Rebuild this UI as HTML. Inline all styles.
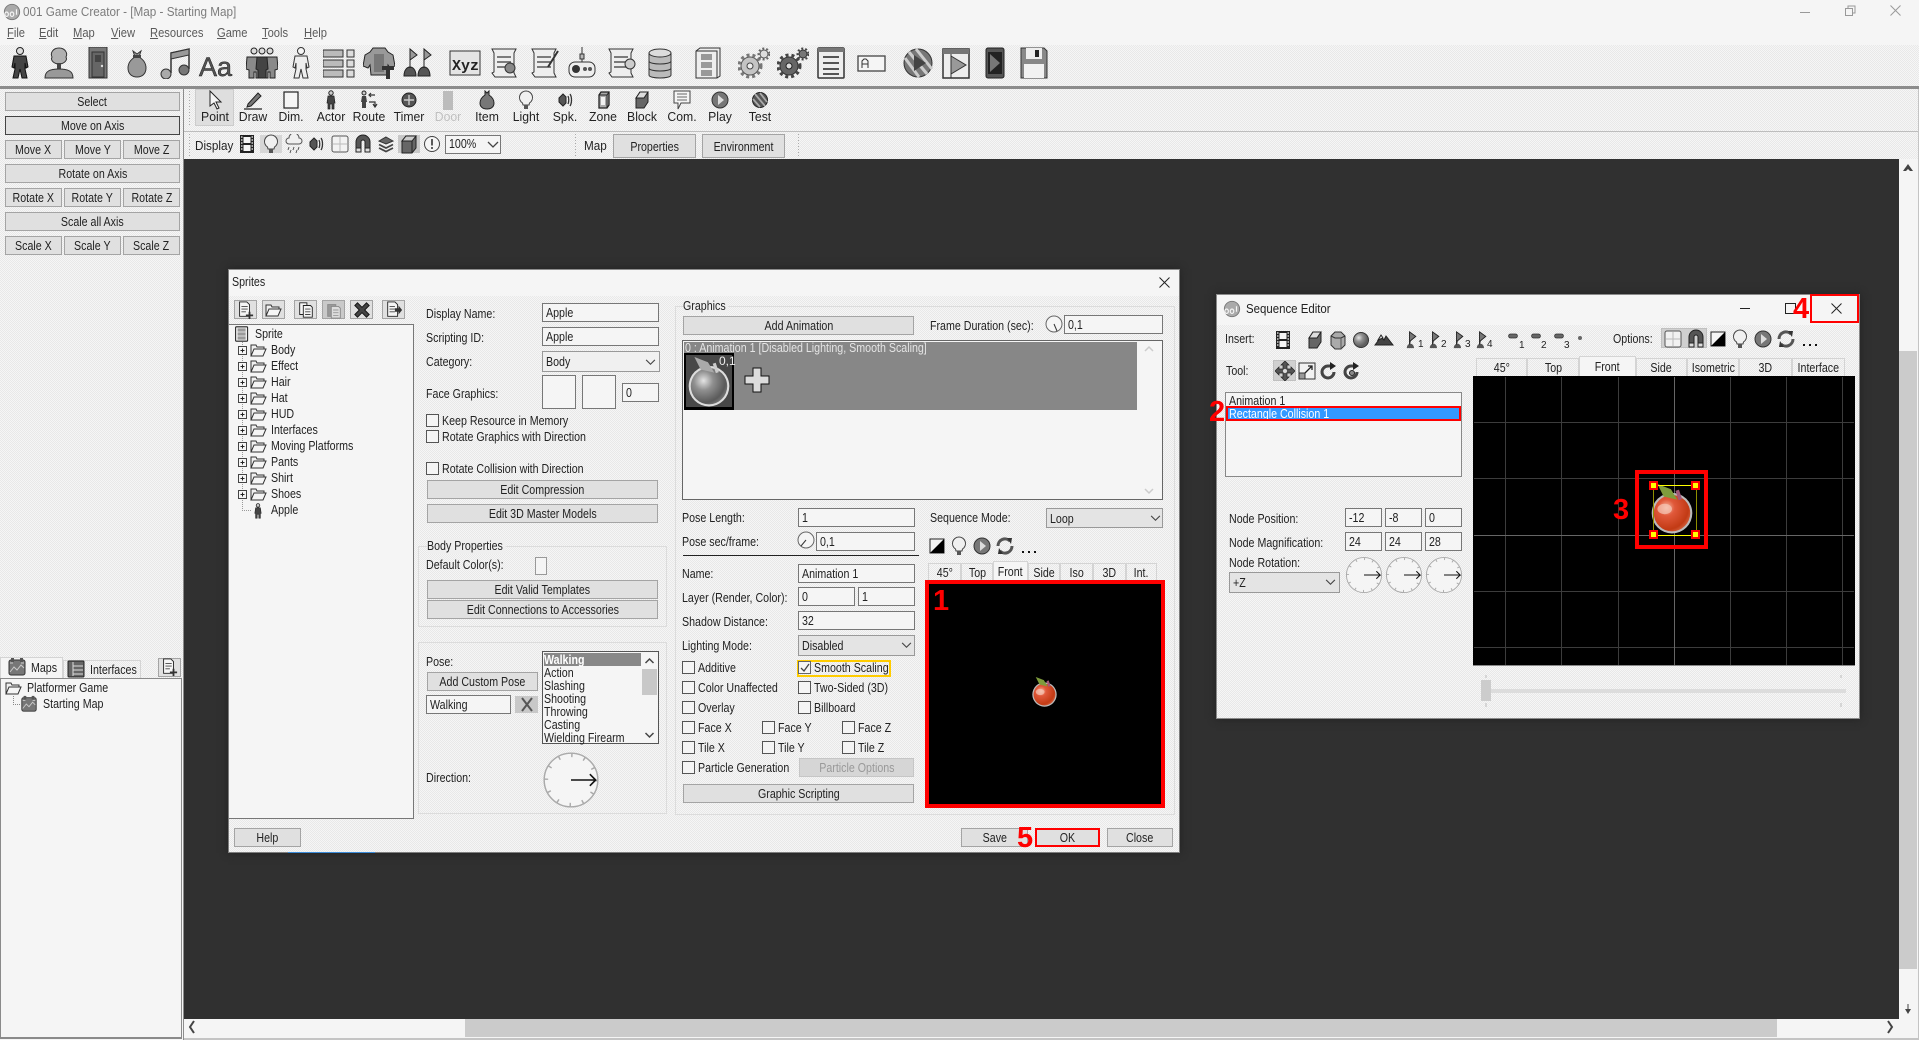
<!DOCTYPE html>
<html><head><meta charset="utf-8"><title>001 Game Creator</title>
<style>
*{box-sizing:border-box}
html,body{margin:0;padding:0;width:1919px;height:1040px;overflow:hidden;background:#f5f5f5;font-family:"Liberation Sans",sans-serif;font-size:13px;color:#222}
div,span.t{position:absolute}
.d{background:repeating-conic-gradient(#e8e8e8 0 25%,#f6f6f6 0 50%) 0 0/2px 2px}
.t{position:absolute;height:16px;line-height:16px;white-space:nowrap;transform:scaleX(.82);transform-origin:0 50%}
.n{position:absolute;height:16px;line-height:16px;white-space:nowrap;text-align:center;width:50px;transform:scaleX(.94)}
.b{display:flex;align-items:center;justify-content:center;background:#e0e0e0;border:1px solid #a4a4a4;white-space:nowrap;overflow:hidden}
.b span{display:inline-block;transform:scaleX(.82);flex:none}
.i{background:#f5f5f5;border:1px solid #777;padding-left:3px;line-height:17px;white-space:nowrap;overflow:hidden}
.i span{display:inline-block;transform:scaleX(.82);transform-origin:0 50%}
.m{background:#e6e6e6;border:1px solid #999;padding-left:3px;line-height:19px;white-space:nowrap}
.m span{display:inline-block;transform:scaleX(.82);transform-origin:0 50%}
.c{width:13px;height:13px;background:#f5f5f5;border:1px solid #555}
.k{background:#f5f5f5;border:1px solid #999}
.tb{display:flex;align-items:center;justify-content:center;border:1px solid #d4d4d4;border-bottom:0;white-space:nowrap}
.tb span{display:inline-block;transform:scaleX(.82)}
.g{border:1px solid #dcdcdc}
.r{position:absolute;border:solid #f00;background:transparent}
.q{position:absolute;font-weight:bold;color:#f00;font-size:29px;line-height:30px;height:30px}
u{text-decoration:underline}
</style></head><body>

<!-- title & menu -->
<span class="t" style="left:23px;top:4px;color:#7c7c7c;transform:scaleX(.9)">001 Game Creator - [Map - Starting Map]</span>
<span class="t" style="left:7px;top:25px;color:#5a5a5a;transform:scaleX(.86)"><u>F</u>ile</span>
<span class="t" style="left:39px;top:25px;color:#5a5a5a;transform:scaleX(.86)"><u>E</u>dit</span>
<span class="t" style="left:73px;top:25px;color:#5a5a5a;transform:scaleX(.86)"><u>M</u>ap</span>
<span class="t" style="left:111px;top:25px;color:#5a5a5a;transform:scaleX(.86)"><u>V</u>iew</span>
<span class="t" style="left:150px;top:25px;color:#5a5a5a;transform:scaleX(.86)"><u>R</u>esources</span>
<span class="t" style="left:217px;top:25px;color:#5a5a5a;transform:scaleX(.86)"><u>G</u>ame</span>
<span class="t" style="left:262px;top:25px;color:#5a5a5a;transform:scaleX(.86)"><u>T</u>ools</span>
<span class="t" style="left:304px;top:25px;color:#5a5a5a;transform:scaleX(.86)"><u>H</u>elp</span>

<!-- toolbars -->
<div class="d" style="left:0;top:45px;width:1919px;height:41px"></div>
<div style="left:0;top:86px;width:1919px;height:3px;background:#8c8c8c"></div>
<div class="d" style="left:184px;top:89px;width:1735px;height:42px"></div>
<div style="left:184px;top:131px;width:1735px;height:1px;background:#bdbdbd"></div>
<div class="d" style="left:184px;top:132px;width:1735px;height:27px"></div>
<div style="left:195px;top:89px;width:39px;height:37px;background:#dedede;border:1px solid #ccc"></div>
<div style="left:260px;top:135px;width:22px;height:18px;background:#d6d6d6"></div>
<div style="left:398px;top:135px;width:22px;height:18px;background:#c8c8c8"></div>

<span class="n" style="left:190px;top:109px">Point</span>
<span class="n" style="left:228px;top:109px">Draw</span>
<span class="n" style="left:266px;top:109px">Dim.</span>
<span class="n" style="left:306px;top:109px">Actor</span>
<span class="n" style="left:344px;top:109px">Route</span>
<span class="n" style="left:384px;top:109px">Timer</span>
<span class="n" style="left:423px;top:109px;color:#c0c0c0">Door</span>
<span class="n" style="left:462px;top:109px">Item</span>
<span class="n" style="left:501px;top:109px">Light</span>
<span class="n" style="left:540px;top:109px">Spk.</span>
<span class="n" style="left:578px;top:109px">Zone</span>
<span class="n" style="left:617px;top:109px">Block</span>
<span class="n" style="left:657px;top:109px">Com.</span>
<span class="n" style="left:695px;top:109px">Play</span>
<span class="n" style="left:735px;top:109px">Test</span>

<span class="t" style="left:195px;top:138px;transform:scaleX(.9)">Display</span>
<div class="i" style="left:445px;top:135px;width:56px;height:19px;line-height:16px"><span>100%</span></div>
<span class="t" style="left:584px;top:138px;transform:scaleX(.9)">Map</span>
<div class="b" style="left:613px;top:134px;width:83px;height:24px"><span>Properties</span></div>
<div class="b" style="left:702px;top:134px;width:83px;height:24px"><span>Environment</span></div>

<!-- sidebar -->
<div class="d" style="left:0;top:89px;width:183px;height:589px"></div>
<div style="left:183px;top:89px;width:1px;height:951px;background:#8c8c8c"></div>
<div class="b" style="left:5px;top:92px;width:175px;height:19px"><span>Select</span></div>
<div class="b" style="left:5px;top:116px;width:175px;height:19px;border-color:#444"><span>Move on Axis</span></div>
<div class="b" style="left:5px;top:140px;width:57px;height:19px"><span>Move X</span></div>
<div class="b" style="left:64px;top:140px;width:57px;height:19px"><span>Move Y</span></div>
<div class="b" style="left:123px;top:140px;width:57px;height:19px"><span>Move Z</span></div>
<div class="b" style="left:5px;top:164px;width:175px;height:19px"><span>Rotate on Axis</span></div>
<div class="b" style="left:5px;top:188px;width:57px;height:19px"><span>Rotate X</span></div>
<div class="b" style="left:64px;top:188px;width:57px;height:19px"><span>Rotate Y</span></div>
<div class="b" style="left:123px;top:188px;width:57px;height:19px"><span>Rotate Z</span></div>
<div class="b" style="left:5px;top:212px;width:175px;height:19px"><span>Scale all Axis</span></div>
<div class="b" style="left:5px;top:236px;width:57px;height:19px"><span>Scale X</span></div>
<div class="b" style="left:64px;top:236px;width:57px;height:19px"><span>Scale Y</span></div>
<div class="b" style="left:123px;top:236px;width:57px;height:19px"><span>Scale Z</span></div>

<div style="left:0;top:657px;width:63px;height:22px;background:#f5f5f5;border:1px solid #d4d4d4;border-bottom:0"></div>
<div class="d" style="left:63px;top:660px;width:78px;height:18px;border:1px solid #d4d4d4;border-bottom:0"></div>
<span class="t" style="left:31px;top:660px">Maps</span>
<span class="t" style="left:90px;top:662px">Interfaces</span>
<div class="b" style="left:158px;top:658px;width:23px;height:19px"></div>
<div style="left:0;top:678px;width:182px;height:361px;background:#f5f5f5;border:1px solid #8a8a8a;border-bottom:2px solid #8a8a8a"></div>
<span class="t" style="left:27px;top:680px">Platformer Game</span>
<span class="t" style="left:43px;top:696px">Starting Map</span>

<!-- dark area -->
<div style="left:184px;top:159px;width:1715px;height:860px;background:#303030"></div>

<!-- scrollbars -->
<div style="left:1899px;top:351px;width:18px;height:618px;background:#cbcbcb"></div>
<div style="left:465px;top:1019px;width:1312px;height:18px;background:#cbcbcb"></div>
<div style="left:184px;top:1038px;width:1735px;height:2px;background:#c4c4c4"></div>
<div style="left:1918px;top:89px;width:1px;height:951px;background:#c4c4c4"></div>

<!-- Sprites dialog -->
<div class="d" style="left:228px;top:269px;width:952px;height:584px;border:1px solid #7d7d7d;border-top-color:#8d8d8d;box-shadow:0 0 8px #222"></div>
<div style="left:229px;top:270px;width:950px;height:26px;background:#f5f5f5"></div>
<div style="left:288px;top:852px;width:87px;height:1px;background:#3b8bd8"></div>
<span class="t" style="left:232px;top:274px">Sprites</span>

<div class="b" style="left:234px;top:300px;width:23px;height:19px"></div>
<div class="b" style="left:262px;top:300px;width:23px;height:19px"></div>
<div class="b" style="left:294px;top:300px;width:23px;height:19px"></div>
<div class="b" style="left:322px;top:300px;width:23px;height:19px;background:#c9c9c9"></div>
<div class="b" style="left:350px;top:300px;width:23px;height:19px"></div>
<div class="b" style="left:382px;top:300px;width:23px;height:19px"></div>

<div style="left:229px;top:324px;width:185px;height:495px;background:#f5f5f5;border-top:1px solid #777;border-right:1px solid #777;border-bottom:1px solid #777"></div>
<span class="t" style="left:255px;top:326px">Sprite</span>
<span class="t" style="left:271px;top:342px">Body</span>
<span class="t" style="left:271px;top:358px">Effect</span>
<span class="t" style="left:271px;top:374px">Hair</span>
<span class="t" style="left:271px;top:390px">Hat</span>
<span class="t" style="left:271px;top:406px">HUD</span>
<span class="t" style="left:271px;top:422px">Interfaces</span>
<span class="t" style="left:271px;top:438px">Moving Platforms</span>
<span class="t" style="left:271px;top:454px">Pants</span>
<span class="t" style="left:271px;top:470px">Shirt</span>
<span class="t" style="left:271px;top:486px">Shoes</span>
<span class="t" style="left:271px;top:502px">Apple</span>

<span class="t" style="left:426px;top:306px">Display Name:</span>
<span class="t" style="left:426px;top:330px">Scripting ID:</span>
<span class="t" style="left:426px;top:354px">Category:</span>
<span class="t" style="left:426px;top:386px">Face Graphics:</span>
<div class="i" style="left:542px;top:303px;width:117px;height:19px"><span>Apple</span></div>
<div class="i" style="left:542px;top:327px;width:117px;height:19px"><span>Apple</span></div>
<div class="m" style="left:542px;top:351px;width:118px;height:21px;background:#f0f0f0"><span>Body</span></div>
<div class="i" style="left:542px;top:375px;width:34px;height:34px"></div>
<div class="i" style="left:582px;top:375px;width:34px;height:34px"></div>
<div class="i" style="left:622px;top:383px;width:37px;height:19px"><span>0</span></div>

<div class="c" style="left:426px;top:414px"></div><span class="t" style="left:442px;top:413px">Keep Resource in Memory</span>
<div class="c" style="left:426px;top:430px"></div><span class="t" style="left:442px;top:429px">Rotate Graphics with Direction</span>
<div class="c" style="left:426px;top:462px"></div><span class="t" style="left:442px;top:461px">Rotate Collision with Direction</span>
<div class="b" style="left:427px;top:480px;width:231px;height:19px"><span>Edit Compression</span></div>
<div class="b" style="left:427px;top:504px;width:231px;height:19px"><span>Edit 3D Master Models</span></div>

<div class="g" style="left:418px;top:546px;width:249px;height:81px"></div>
<span class="t" style="left:427px;top:538px;background:#efefef;padding-right:3px">Body Properties</span>
<span class="t" style="left:426px;top:557px">Default Color(s):</span>
<div class="k" style="left:535px;top:557px;width:12px;height:18px"></div>
<div class="b" style="left:427px;top:580px;width:231px;height:19px"><span>Edit Valid Templates</span></div>
<div class="b" style="left:427px;top:600px;width:231px;height:19px"><span>Edit Connections to Accessories</span></div>

<div class="g" style="left:418px;top:642px;width:249px;height:172px"></div>
<span class="t" style="left:426px;top:654px">Pose:</span>
<div class="b" style="left:427px;top:672px;width:111px;height:19px"><span>Add Custom Pose</span></div>
<div class="i" style="left:426px;top:695px;width:85px;height:19px"><span>Walking</span></div>
<div style="left:515px;top:696px;width:23px;height:17px;background:#c8c8c8"></div>
<div style="left:542px;top:651px;width:117px;height:93px;background:#f5f5f5;border:1px solid #555"></div>
<div style="left:544px;top:653px;width:97px;height:13px;background:#888"></div>
<div style="left:642px;top:669px;width:15px;height:26px;background:#c8c8c8"></div>
<span class="t" style="left:544px;top:652px;color:#fff;font-weight:bold">Walking</span>
<span class="t" style="left:544px;top:665px">Action</span>
<span class="t" style="left:544px;top:678px">Slashing</span>
<span class="t" style="left:544px;top:691px">Shooting</span>
<span class="t" style="left:544px;top:704px">Throwing</span>
<span class="t" style="left:544px;top:717px">Casting</span>
<span class="t" style="left:544px;top:730px">Wielding Firearm</span>
<span class="t" style="left:426px;top:770px">Direction:</span>
<div class="b" style="left:234px;top:828px;width:67px;height:19px"><span>Help</span></div>

<div class="g" style="left:675px;top:306px;width:500px;height:509px"></div>
<span class="t" style="left:683px;top:298px;background:#efefef;padding-right:3px">Graphics</span>
<div class="b" style="left:683px;top:316px;width:231px;height:19px"><span>Add Animation</span></div>
<span class="t" style="left:930px;top:318px">Frame Duration (sec):</span>
<div class="i" style="left:1064px;top:315px;width:99px;height:19px"><span>0,1</span></div>
<div style="left:682px;top:340px;width:481px;height:160px;background:#f5f5f5;border:1px solid #666"></div>
<div style="left:684px;top:342px;width:453px;height:68px;background:#878787"></div>
<span class="t" style="left:685px;top:340px;color:#e4e4e4">0 : Animation 1 [Disabled Lighting, Smooth Scaling]</span>
<div style="left:684px;top:353px;width:50px;height:57px;background:#000"></div>
<div style="left:686px;top:355px;width:46px;height:52px;background:#484848"></div>

<span class="t" style="left:682px;top:510px">Pose Length:</span>
<div class="i" style="left:798px;top:508px;width:117px;height:19px"><span>1</span></div>
<span class="t" style="left:682px;top:534px">Pose sec/frame:</span>
<div class="i" style="left:816px;top:532px;width:99px;height:19px"><span>0,1</span></div>
<div style="left:683px;top:555px;width:236px;height:1px;background:#222"></div>
<span class="t" style="left:930px;top:510px">Sequence Mode:</span>
<div class="m" style="left:1046px;top:508px;width:117px;height:20px;background:#e4e4e4"><span>Loop</span></div>

<div class="tb d" style="left:928px;top:563px;width:33px;height:18px"><span>45°</span></div>
<div class="tb d" style="left:961px;top:563px;width:32px;height:18px"><span>Top</span></div>
<div class="tb" style="left:993px;top:561px;width:35px;height:20px;background:#f5f5f5"><span>Front</span></div>
<div class="tb d" style="left:1028px;top:563px;width:32px;height:18px"><span>Side</span></div>
<div class="tb d" style="left:1060px;top:563px;width:33px;height:18px"><span>Iso</span></div>
<div class="tb d" style="left:1093px;top:563px;width:33px;height:18px"><span>3D</span></div>
<div class="tb d" style="left:1126px;top:563px;width:31px;height:18px"><span>Int.</span></div>

<span class="t" style="left:682px;top:566px">Name:</span>
<div class="i" style="left:798px;top:564px;width:117px;height:19px"><span>Animation 1</span></div>
<span class="t" style="left:682px;top:590px">Layer (Render, Color):</span>
<div class="i" style="left:798px;top:587px;width:57px;height:19px"><span>0</span></div>
<div class="i" style="left:858px;top:587px;width:57px;height:19px"><span>1</span></div>
<span class="t" style="left:682px;top:614px">Shadow Distance:</span>
<div class="i" style="left:798px;top:611px;width:117px;height:19px"><span>32</span></div>
<span class="t" style="left:682px;top:638px">Lighting Mode:</span>
<div class="m" style="left:798px;top:635px;width:117px;height:21px;background:#e4e4e4"><span>Disabled</span></div>

<div class="c" style="left:682px;top:661px"></div><span class="t" style="left:698px;top:660px">Additive</span>
<div style="left:797px;top:660px;width:94px;height:17px;border:2px solid #fc0"></div>
<div class="c" style="left:798px;top:661px;border-color:#666"></div><span class="t" style="left:814px;top:660px">Smooth Scaling</span>
<div class="c" style="left:682px;top:681px"></div><span class="t" style="left:698px;top:680px">Color Unaffected</span>
<div class="c" style="left:798px;top:681px"></div><span class="t" style="left:814px;top:680px">Two-Sided (3D)</span>
<div class="c" style="left:682px;top:701px"></div><span class="t" style="left:698px;top:700px">Overlay</span>
<div class="c" style="left:798px;top:701px"></div><span class="t" style="left:814px;top:700px">Billboard</span>
<div class="c" style="left:682px;top:721px"></div><span class="t" style="left:698px;top:720px">Face X</span>
<div class="c" style="left:762px;top:721px"></div><span class="t" style="left:778px;top:720px">Face Y</span>
<div class="c" style="left:842px;top:721px"></div><span class="t" style="left:858px;top:720px">Face Z</span>
<div class="c" style="left:682px;top:741px"></div><span class="t" style="left:698px;top:740px">Tile X</span>
<div class="c" style="left:762px;top:741px"></div><span class="t" style="left:778px;top:740px">Tile Y</span>
<div class="c" style="left:842px;top:741px"></div><span class="t" style="left:858px;top:740px">Tile Z</span>
<div class="c" style="left:682px;top:761px"></div><span class="t" style="left:698px;top:760px">Particle Generation</span>
<div class="b" style="left:799px;top:758px;width:115px;height:19px;background:#d6d6d6;border-color:#c6c6c6;color:#999"><span>Particle Options</span></div>
<div class="b" style="left:683px;top:784px;width:231px;height:19px"><span>Graphic Scripting</span></div>

<div style="left:925px;top:580px;width:240px;height:228px;background:#000"></div>
<div class="b" style="left:961px;top:828px;width:67px;height:19px"><span>Save</span></div>
<div class="b" style="left:1035px;top:828px;width:65px;height:19px"><span>OK</span></div>
<div class="b" style="left:1107px;top:828px;width:66px;height:19px"><span>Close</span></div>

<!-- Sequence Editor -->
<div class="d" style="left:1216px;top:294px;width:644px;height:425px;border:1px solid #8a8a8a;box-shadow:0 0 8px #222"></div>
<div style="left:1217px;top:295px;width:642px;height:30px;background:#f5f5f5"></div>
<span class="t" style="left:1246px;top:301px;transform:scaleX(.88)">Sequence Editor</span>
<span class="t" style="left:1225px;top:331px">Insert:</span>
<span class="t" style="left:1613px;top:331px">Options:</span>
<div style="left:1661px;top:328px;width:46px;height:20px;background:#d0d0d0;border:1px solid #c0c0c0"></div>
<span class="t" style="left:1226px;top:363px">Tool:</span>
<div style="left:1273px;top:360px;width:23px;height:21px;background:#d0d0d0;border:1px solid #c0c0c0"></div>
<div style="left:1225px;top:392px;width:237px;height:85px;background:#f5f5f5;border:1px solid #888"></div>
<span class="t" style="left:1229px;top:393px">Animation 1</span>
<div style="left:1226px;top:406px;width:235px;height:15px;background:#39f"></div>
<span class="t" style="left:1229px;top:406px;color:#fff">Rectangle Collision 1</span>
<span class="t" style="left:1229px;top:511px">Node Position:</span>
<span class="t" style="left:1229px;top:535px">Node Magnification:</span>
<span class="t" style="left:1229px;top:555px">Node Rotation:</span>
<div class="i" style="left:1345px;top:508px;width:37px;height:19px"><span>-12</span></div>
<div class="i" style="left:1385px;top:508px;width:37px;height:19px"><span>-8</span></div>
<div class="i" style="left:1425px;top:508px;width:37px;height:19px"><span>0</span></div>
<div class="i" style="left:1345px;top:532px;width:37px;height:19px"><span>24</span></div>
<div class="i" style="left:1385px;top:532px;width:37px;height:19px"><span>24</span></div>
<div class="i" style="left:1425px;top:532px;width:37px;height:19px"><span>28</span></div>
<div class="m" style="left:1229px;top:572px;width:111px;height:21px;background:#e4e4e4"><span>+Z</span></div>

<div class="tb d" style="left:1476px;top:358px;width:51px;height:18px"><span>45°</span></div>
<div class="tb d" style="left:1527px;top:358px;width:52px;height:18px"><span>Top</span></div>
<div class="tb" style="left:1579px;top:356px;width:57px;height:20px;background:#f5f5f5"><span>Front</span></div>
<div class="tb d" style="left:1636px;top:358px;width:51px;height:18px"><span>Side</span></div>
<div class="tb d" style="left:1687px;top:358px;width:52px;height:18px"><span>Isometric</span></div>
<div class="tb d" style="left:1739px;top:358px;width:53px;height:18px"><span>3D</span></div>
<div class="tb d" style="left:1792px;top:358px;width:53px;height:18px"><span>Interface</span></div>
<div style="left:1473px;top:376px;width:382px;height:290px;background:#000;border-bottom:1px solid #888"></div>
<div style="left:1491px;top:689px;width:355px;height:4px;background:#dcdcdc"></div>
<div style="left:1481px;top:680px;width:10px;height:21px;background:#ccc"></div>

<!-- icon overlay -->
<svg style="position:absolute;left:0;top:0" width="1919" height="1040" viewBox="0 0 1919 1040" fill="none">
<defs>
<radialGradient id="ra" cx=".35" cy=".35" r=".75"><stop offset="0" stop-color="#f8b8a0"/><stop offset=".3" stop-color="#e0583a"/><stop offset=".8" stop-color="#c23a14"/><stop offset="1" stop-color="#d86a48"/></radialGradient>
<radialGradient id="rg" cx=".35" cy=".35" r=".75"><stop offset="0" stop-color="#e4e4e4"/><stop offset=".35" stop-color="#909090"/><stop offset=".8" stop-color="#5a5a5a"/><stop offset="1" stop-color="#808080"/></radialGradient>
<symbol id="apple" viewBox="0 0 40 48"><circle cx="20" cy="28" r="19.5" fill="#bbb"/><circle cx="20" cy="28" r="17.5" fill="url(#ra)"/><ellipse cx="13" cy="24" rx="7" ry="5" fill="#f5c8b8" opacity=".7"/><path d="M6 0l13 5 6 10-13-3z" fill="#7f9c3c"/><path d="M25 6l3 9" stroke="#a05878" stroke-width="3.500"/></symbol>
<symbol id="appleg" viewBox="0 0 40 48"><circle cx="20" cy="28" r="19.5" fill="#ddd"/><circle cx="20" cy="28" r="17.5" fill="url(#rg)"/><path d="M6 0l13 5 6 10-13-3z" fill="#aaa"/><path d="M25 6l3 9" stroke="#ccc" stroke-width="3"/></symbol>
<symbol id="actor" viewBox="0 0 32 32"><circle cx="16" cy="4" r="3.5" fill="#ddd" stroke="#222"/><path d="M10 9h12l2 11-2 1-1-5v6l2 9h-5l-2-9-2 9h-5l2-9v-6l-1 5-2-1z" fill="#444" stroke="#111"/></symbol>
<symbol id="tree" viewBox="0 0 32 32"><path d="M16 1c6 0 9 5 7 9 2 4-3 7-7 7s-9-3-7-7c-2-4 1-9 7-9z" fill="#b0b0b0" stroke="#333"/><rect x="14" y="16" width="4" height="8" fill="#444"/><path d="M2 31c0-7 5-9 14-9s14 2 14 9z" fill="#999" stroke="#333"/></symbol>
<symbol id="door" viewBox="0 0 32 32"><rect x="7" y="0" width="18" height="31" fill="#777" stroke="#333"/><rect x="10" y="5" width="12" height="25" fill="#666" stroke="#333"/><rect x="13" y="8" width="6" height="7" fill="#444"/><circle cx="20" cy="19" r="1.2" fill="#ddd"/></symbol>
<symbol id="bag" viewBox="0 0 32 32"><path d="M12 4l4 3 4-3-2 6c5 3 7 7 7 11 0 6-4 9-9 9s-9-3-9-9c0-4 2-8 7-11z" fill="#999" stroke="#333"/><rect x="12" y="8" width="8" height="3" fill="#444"/></symbol>
<symbol id="notes" viewBox="0 0 32 32"><path d="M12 26V6l18-4v20" stroke="#333" stroke-width="1.5"/><path d="M12 6l18-4v6l-18 4z" fill="#999" stroke="#333"/><circle cx="7" cy="27" r="5" fill="#aaa" stroke="#333"/><circle cx="25" cy="23" r="5" fill="#777" stroke="#333"/></symbol>
<symbol id="group" viewBox="0 0 32 32"><g stroke="#222"><circle cx="8" cy="4" r="3" fill="#ddd"/><circle cx="16" cy="4" r="3" fill="#ddd"/><circle cx="24" cy="4" r="3" fill="#ddd"/><path d="M1 10h30l1 12-3 1v8h-5v-6h-2v6h-4v-8h-4v8H10v-6H8v6H3v-8l-3-1z" fill="#8a8a8a"/><path d="M11 10h10l1 12-2 1v8h-8v-8l-2-1z" fill="#444"/></g></symbol>
<symbol id="man" viewBox="0 0 32 32"><circle cx="16" cy="4" r="3.5" fill="#f5f5f5" stroke="#333"/><path d="M10 9h12l2 11-2 1-1-5v6l2 9h-5l-2-9-2 9h-5l2-9v-6l-1 5-2-1z" fill="#eee" stroke="#333"/></symbol>
<symbol id="lst" viewBox="0 0 32 32"><g stroke="#333" fill="#bbb"><rect x="0" y="3" width="20" height="7"/><rect x="0" y="13" width="20" height="7"/><rect x="0" y="23" width="20" height="7"/><rect x="24" y="3" width="7" height="7" fill="#ddd"/><rect x="24" y="13" width="7" height="7" fill="#ddd"/><rect x="24" y="23" width="7" height="7" fill="#ddd"/></g></symbol>
<symbol id="armor" viewBox="0 0 32 32"><path d="M10 1h12l3 4 5 3 2 11-5 2-2-3-1 10H8L7 18l-2 3-5-2L2 8l5-3z" fill="#999" stroke="#222"/><path d="M11 7h10v18H11z" fill="#777"/><path d="M19 19h12v4h-4v9h-4v-9h-4z" fill="#333"/></symbol>
<symbol id="flags" viewBox="0 0 32 32"><path d="M3 29c0-6 3-9 6-9s6 3 6 9zM17 29c0-6 3-9 6-9s6 3 6 9z" fill="#555" stroke="#222"/><path d="M9 21V2l7 6-7 5M23 21V2l7 6-7 5" fill="#999" stroke="#222"/></symbol>
<symbol id="xyzb" viewBox="0 0 32 32"><rect x="1" y="4" width="30" height="24" fill="#e4e4e4" stroke="#333"/></symbol>
<symbol id="scroll" viewBox="0 0 32 32"><path d="M3 2h24l-2 4v20l2 4H6l-3-4 2-1V6z" fill="#eee" stroke="#333"/><path d="M8 10h14M8 15h14M8 20h14" stroke="#555" stroke-width="1.5"/></symbol>
<symbol id="pad" viewBox="0 0 32 32"><path d="M16 0v16" stroke="#333"/><rect x="14" y="7" width="4" height="5" fill="#bbb" stroke="#333"/><rect x="3" y="15" width="26" height="15" rx="6" fill="#eee" stroke="#333"/><circle cx="10" cy="22" r="4" fill="#333"/><circle cx="19" cy="22" r="2" fill="#555"/><circle cx="24" cy="22" r="2" fill="#555"/></symbol>
<symbol id="db" viewBox="0 0 32 32"><path d="M5 6v22c0 4 22 4 22 0V6" fill="#bbb" stroke="#333"/><ellipse cx="16" cy="6" rx="11" ry="4" fill="#ddd" stroke="#333"/><path d="M5 14c0 4 22 4 22 0M5 21c0 4 22 4 22 0" stroke="#333"/></symbol>
<symbol id="cab" viewBox="0 0 32 32"><path d="M5 4l4-3h20v28l-3 2H5z" fill="#eee" stroke="#333"/><path d="M5 4h21v27" stroke="#333"/><rect x="10" y="7" width="11" height="6" fill="#999"/><rect x="10" y="15" width="11" height="6" fill="#999"/><rect x="10" y="23" width="11" height="6" fill="#999"/></symbol>
<symbol id="gear" viewBox="0 0 32 32"><circle cx="12" cy="19" r="9" fill="#c4c4c4" stroke="#555" stroke-width="1"/><circle cx="12" cy="19" r="11" stroke="#777" stroke-width="3" stroke-dasharray="3 3"/><circle cx="12" cy="19" r="3" fill="#eee" stroke="#444"/><circle cx="26" cy="7" r="4" fill="#ddd" stroke="#555"/><circle cx="26" cy="7" r="5.5" stroke="#666" stroke-width="2" stroke-dasharray="2 2"/></symbol>
<symbol id="gearb" viewBox="0 0 32 32"><circle cx="12" cy="19" r="9" fill="#666" stroke="#333"/><circle cx="12" cy="19" r="11" stroke="#444" stroke-width="3" stroke-dasharray="3 3"/><circle cx="12" cy="19" r="3" fill="#ddd" stroke="#222"/><circle cx="26" cy="7" r="4" fill="#777" stroke="#333"/><circle cx="26" cy="7" r="5.5" stroke="#444" stroke-width="2" stroke-dasharray="2 2"/></symbol>
<symbol id="lines" viewBox="0 0 32 32"><rect x="3" y="1" width="26" height="30" rx="1" fill="#eee" stroke="#333" stroke-width="1.5"/><rect x="3" y="1" width="26" height="4" fill="#777"/><path d="M8 10h16M8 16h16M8 22h16M8 27h16" stroke="#555" stroke-width="2"/></symbol>
<symbol id="afield" viewBox="0 0 32 32"><rect x="3" y="9" width="27" height="15" fill="#f5f5f5" stroke="#444" stroke-width="1.3"/><path d="M7 21v-7l2-2h2l2 2v7M7 17h6" stroke="#333"/></symbol>
<symbol id="ball" viewBox="0 0 32 32"><circle cx="16" cy="16" r="14" fill="#777" stroke="#333"/><path d="M7 5l18 22M3 11l14 19M14 2l16 20" stroke="#ccc" stroke-width="3"/><path d="M12 8l12 8-12 8z" fill="#444"/></symbol>
<symbol id="winplay" viewBox="0 0 32 32"><rect x="3" y="2" width="26" height="29" fill="#eee" stroke="#333" stroke-width="1.5"/><rect x="3" y="2" width="26" height="5" fill="#777"/><path d="M11 7v24" stroke="#333"/><path d="M11 9l15 9-15 9z" fill="#999" stroke="#333"/></symbol>
<symbol id="phone" viewBox="0 0 32 32"><rect x="7" y="1" width="18" height="30" rx="2" fill="#555" stroke="#222"/><rect x="9" y="5" width="14" height="22" fill="#222"/><path d="M11 7l10 9-10 9z" fill="#777"/></symbol>
<symbol id="floppy" viewBox="0 0 32 32"><path d="M3 1h23l3 3v27H3z" fill="#888" stroke="#333"/><rect x="8" y="1" width="16" height="11" fill="#eee"/><rect x="17" y="3" width="4" height="7" fill="#222"/><rect x="6" y="17" width="20" height="14" fill="#f2f2f2"/></symbol>

<symbol id="film" viewBox="0 0 20 20"><rect x="3" y="1" width="14" height="18" fill="#222"/><rect x="6.500" y="3" width="7" height="6" fill="#f5f5f5"/><rect x="6.500" y="11" width="7" height="6" fill="#f5f5f5"/><path d="M4 3h1.500M4 6h1.500M4 9h1.500M4 12h1.500M4 15h1.500M14.500 3h1.500M14.500 6h1.500M14.500 9h1.500M14.500 12h1.500M14.500 15h1.500" stroke="#f5f5f5" stroke-width="1.300"/></symbol>
<symbol id="bulb" viewBox="0 0 20 20"><path d="M10 1a6.500 6.500 0 0 0-3.500 12l.5 2h6l.5-2A6.500 6.500 0 0 0 10 1z" fill="#f0f0f0" stroke="#444"/><rect x="8" y="15" width="4" height="4" fill="#555"/></symbol>
<symbol id="rain" viewBox="0 0 20 20"><path d="M5 10a3 3 0 0 1 0-6 5 5 0 0 1 10 0 3 3 0 0 1 0 6z" fill="#f0f0f0" stroke="#555"/><path d="M5 13l-1 3M10 13l-1 3M15 13l-1 3M7 16l-1 3M13 16l-1 3" stroke="#555"/></symbol>
<symbol id="spk" viewBox="0 0 20 20"><path d="M8 4l-4 4v4l4 4 3-3V7z" fill="#555" stroke="#222"/><path d="M13 6c1 2 1 6 0 8M15 4c2 3 2 9 0 12" stroke="#333" stroke-width="1.3"/></symbol>
<symbol id="grid" viewBox="0 0 20 20"><rect x="2" y="2" width="16" height="16" rx="2" fill="#f2f2f2" stroke="#555"/><path d="M10 3v14M3 10h14" stroke="#bbb"/></symbol>
<symbol id="magnet" viewBox="0 0 20 20"><path d="M3 18V8a7 7 0 0 1 14 0v10h-5V8a2 2 0 0 0-4 0v10z" fill="#555" stroke="#222"/><path d="M3 14h5v4H3zM12 14h5v4h-5z" fill="#ddd" stroke="#222"/></symbol>
<symbol id="layers" viewBox="0 0 20 20"><path d="M10 3l7 4-7 3-7-3z" fill="#666" stroke="#333"/><path d="M3 10.500l7 3.500 7-3.500M3 14l7 3.500 7-3.500" stroke="#444" stroke-width="1.700"/></symbol>
<symbol id="box" viewBox="0 0 20 20"><path d="M3 7l4-5h10v12l-4 5H3z" fill="#666" stroke="#222"/><path d="M3 7h10l4-5H7z" fill="#ccc" stroke="#222"/><path d="M13 7v12" stroke="#222"/></symbol>
<symbol id="excl" viewBox="0 0 20 20"><circle cx="10" cy="10" r="7.500" fill="#f5f5f5" stroke="#444"/><path d="M10 5v6.500" stroke="#333" stroke-width="1.600"/><circle cx="10" cy="14" r="1" fill="#333"/></symbol>
<symbol id="half" viewBox="0 0 20 20"><rect x="3" y="3" width="14" height="14" fill="#f5f5f5" stroke="#222"/><path d="M17 3v14H3z" fill="#000"/></symbol>
<symbol id="play" viewBox="0 0 20 20"><circle cx="10" cy="10" r="8" fill="#777" stroke="#333"/><path d="M8 5l6 5-6 5z" fill="#ddd"/></symbol>
<symbol id="sync" viewBox="0 0 20 20"><path d="M3 10a7 7 0 0 1 12-5M17 10a7 7 0 0 1-12 5" stroke="#555" stroke-width="3"/><path d="M12 2l5 0-1 6zM8 18l-5 0 1-6z" fill="#333"/></symbol>
<symbol id="cursor" viewBox="0 0 20 20"><path d="M5 1v15l4-3 3 6 2-1-3-6h5z" fill="#f5f5f5" stroke="#222"/></symbol>
<symbol id="pen" viewBox="0 0 20 20"><path d="M5 14L15 3l3 3L8 16l-4 1z" fill="#777" stroke="#222"/><path d="M1 19h18" stroke="#222" stroke-width="1.2"/></symbol>
<symbol id="rect" viewBox="0 0 20 20"><rect x="3" y="2" width="14" height="16" fill="#f5f5f5" stroke="#222" stroke-width="1.2"/></symbol>
<symbol id="actorS" viewBox="0 0 20 20"><circle cx="10" cy="3" r="2.200" fill="#ccc" stroke="#222"/><path d="M7 6h6l1 7h-1v6h-2v-5h-2v5H7v-6H6z" fill="#444" stroke="#222" stroke-width=".7"/></symbol>
<symbol id="route" viewBox="0 0 20 20"><circle cx="5" cy="3" r="2" fill="#ccc" stroke="#222"/><path d="M3 6h4l1 6H7v6H3v-6H2z" fill="#444"/><path d="M10 5h6M12 3l-2 2 2 2M10 12h6v4M14 14l2 3 2-3" stroke="#333" stroke-width="1.2"/></symbol>
<symbol id="timer" viewBox="0 0 20 20"><circle cx="10" cy="10" r="7" fill="#555" stroke="#222"/><path d="M10 5v10M5 10h10" stroke="#ccc" stroke-width="1.400"/></symbol>
<symbol id="doorS" viewBox="0 0 20 20"><rect x="5" y="1" width="10" height="19" fill="#bcbcbc"/></symbol>
<symbol id="item" viewBox="0 0 20 20"><path d="M8 1l2 2 2-2v4c3 2 5 5 5 8 0 4-3 6-7 6s-7-2-7-6c0-3 2-6 5-8z" fill="#777" stroke="#222"/></symbol>
<symbol id="block" viewBox="0 0 20 20"><path d="M4 8l4-6h8v10l-4 6H4z" fill="#666" stroke="#222"/><path d="M4 8h8l4-6H8z" fill="#ddd" stroke="#222"/></symbol>
<symbol id="zone" viewBox="0 0 20 20"><path d="M6 5l2-3h8v13l-2 3H6z" fill="#aaa" stroke="#222" stroke-width="1.300"/><path d="M6 5h8l2-3M14 5v13" stroke="#222"/><rect x="8" y="7" width="4" height="8" fill="#f2f2f2"/></symbol>
<symbol id="com" viewBox="0 0 20 20"><path d="M2 1h16v12H9l-3 6v-6H2z" fill="#f5f5f5" stroke="#444"/><path d="M5 4h10M5 7h10M5 10h10" stroke="#666"/></symbol>
<symbol id="test" viewBox="0 0 20 20"><circle cx="10" cy="10" r="7.500" fill="#555" stroke="#222"/><path d="M5 4l10 12M3 9l7 8M10 3l7 9" stroke="#aaa" stroke-width="1.800"/></symbol>
<symbol id="cyl" viewBox="0 0 20 20"><path d="M3 6l4-4h6l4 4v9l-4 4H7l-4-4z" fill="#aaa" stroke="#333"/><path d="M3 6l4 2h6l4-2" stroke="#333"/><path d="M13 8v11" stroke="#555"/></symbol>
<symbol id="sph" viewBox="0 0 20 20"><circle cx="10" cy="10" r="7.500" fill="url(#rg)" stroke="#333"/></symbol>
<symbol id="terr" viewBox="0 0 20 20"><path d="M1 15l6-8 3 3 2-4 7 9z" fill="#444" stroke="#222"/><path d="M4 10l3-5 2 3z" fill="#ddd" stroke="#222"/></symbol>
<symbol id="flag" viewBox="0 0 20 20"><path d="M2 19c0-3 2-5 4-5s4 2 4 5z" fill="#555"/><path d="M5 15V1l7 5-6 5z" fill="#777" stroke="#222"/></symbol>
<symbol id="node" viewBox="0 0 20 20"><rect x="2" y="5" width="11" height="5" rx="2.500" fill="#666" stroke="#333"/></symbol>
<symbol id="move" viewBox="0 0 20 20"><path d="M10 0l4 4h-2v4h4V6l4 4-4 4v-2h-4v4h2l-4 4-4-4h2v-4H4v2l-4-4 4-4v2h4V4H6z" fill="#555" stroke="#222" stroke-width=".7"/><circle cx="10" cy="10" r="2" fill="#ddd"/></symbol>
<symbol id="scale" viewBox="0 0 20 20"><rect x="2" y="2" width="16" height="16" fill="#f2f2f2" stroke="#333"/><rect x="2" y="12" width="6" height="6" fill="#999" stroke="#333"/><path d="M8 12l7-7M11 5h4v4" stroke="#222" stroke-width="1.300"/></symbol>
<symbol id="rot" viewBox="0 0 20 20"><path d="M15 11a6 6 0 1 1-6-6h3" stroke="#444" stroke-width="3"/><path d="M11 1l6 4-6 4z" fill="#222"/></symbol>
<symbol id="rot2" viewBox="0 0 20 20"><path d="M15 11a6 6 0 1 1-6-6h3" stroke="#444" stroke-width="3"/><path d="M11 1l6 4-6 4z" fill="#222"/><circle cx="10" cy="12" r="2.500" fill="#888" stroke="#222"/></symbol>
<symbol id="folder" viewBox="0 0 17 15"><path d="M1 13V2h5l1 2h7v2" fill="#f0f0f0" stroke="#333"/><path d="M1 13l3-7h12l-3 7z" fill="#f5f5f5" stroke="#333"/></symbol>
<symbol id="map" viewBox="0 0 20 20"><rect x="2" y="3" width="16" height="15" rx="2" fill="#777" stroke="#333"/><path d="M3 6h3M14 6h3M3 15l4-5 3 3 4-5 3 3" stroke="#ccc"/><rect x="4" y="1" width="3" height="4" fill="#555"/><rect x="13" y="1" width="3" height="4" fill="#555"/></symbol>
<symbol id="listS" viewBox="0 0 20 20"><rect x="2" y="2" width="16" height="16" rx="1" fill="#666" stroke="#222"/><path d="M7 3v14M7 7h10M7 11h10M7 15h10" stroke="#ddd"/></symbol>
<symbol id="newdoc" viewBox="0 0 20 20"><path d="M4 1h8l3 3v13H4z" fill="#f5f5f5" stroke="#222"/><path d="M6 6h7M6 9h7M6 12h5" stroke="#444"/><path d="M14 12h2v3h3v2h-3v3h-2v-3h-3v-2h3z" fill="#333"/></symbol>
<symbol id="copy" viewBox="0 0 20 20"><path d="M3 2h8v13H3z" fill="#f5f5f5" stroke="#222"/><path d="M7 5h8l2 2v11H7z" fill="#f5f5f5" stroke="#222"/><path d="M9 9h6M9 12h6M9 15h6" stroke="#444"/></symbol>
<symbol id="copyd" viewBox="0 0 20 20"><path d="M3 4h9v13H3z" fill="#999" stroke="#888"/><path d="M7 6h8l2 2v11H7z" fill="#ddd" stroke="#888"/><path d="M9 10h6M9 13h6M9 16h6" stroke="#999"/></symbol>
<symbol id="del" viewBox="0 0 20 20"><path d="M2 5l3-3 5 5 5-5 3 3-5 5 5 5-3 3-5-5-5 5-3-3 5-5z" fill="#444" stroke="#111"/></symbol>
<symbol id="exp" viewBox="0 0 20 20"><path d="M3 1h8l3 3v13H3z" fill="#f5f5f5" stroke="#222"/><path d="M5 6h6M5 9h6M5 12h6" stroke="#444"/><path d="M11 8h4V5l4 5-4 5v-3h-4z" fill="#333"/></symbol>
<symbol id="cabS" viewBox="0 0 20 20"><rect x="2" y="1" width="15" height="18" rx="1" fill="#eee" stroke="#222" stroke-width="1.300"/><rect x="4.500" y="3" width="10" height="4" fill="#999"/><rect x="4.500" y="8" width="10" height="4" fill="#999"/><rect x="4.500" y="13" width="10" height="4" fill="#999"/></symbol>
<symbol id="logo" viewBox="0 0 20 20"><circle cx="10" cy="10" r="8.500" fill="#aaa" stroke="#777"/><path d="M4 10a2 2.500 0 1 0 .01 0M10 10a2 2.500 0 1 0 .01 0M15 7v6" stroke="#f5f5f5" stroke-width="1.300"/></symbol>
<symbol id="clock" viewBox="0 0 40 40"><circle cx="20" cy="20" r="18.500" fill="#f5f5f5" stroke="#aaa"/><circle cx="20" cy="20" r="17" stroke="#aaa" stroke-width="2.500" stroke-dasharray="1 7.900"/><path d="M20 20h17M33 16l4 4-4 4" stroke="#111" stroke-width="1.100"/></symbol>
<symbol id="chev" viewBox="0 0 12 8"><path d="M1 1l5 5 5-5" stroke="#444" stroke-width="1.300"/></symbol>
</defs>

<!-- window chrome -->
<use href="#logo" x="3" y="3" width="18" height="18"/>
<path d="M1800 12.500h10" stroke="#999"/>
<path d="M1845.500 8.500h7v7h-7zM1848 8.500v-2.500h7v7h-2.500" stroke="#999"/>
<path d="M1890.500 5.500l10 10m0-10l-10 10" stroke="#999"/>
<path d="M1908 164l-5 7h3l2-2 2 2h3z" fill="#444"/>
<path d="M1908 1014l-3-5h6z" fill="#444"/><path d="M1908 1004v6" stroke="#444"/>
<path d="M194 1021l-4 6 4 6" stroke="#444" stroke-width="2"/>
<path d="M1888 1021l4 6-4 6" stroke="#444" stroke-width="2"/>

<!-- main toolbar -->
<use href="#actor" x="4" y="47" width="32" height="32"/>
<use href="#tree" x="43" y="47" width="32" height="32"/>
<use href="#door" x="82" y="47" width="32" height="32"/>
<use href="#bag" x="121" y="47" width="32" height="32"/>
<use href="#notes" x="159" y="47" width="32" height="32"/>
<text x="199" y="76" font-family="Liberation Sans,sans-serif" font-size="27" fill="#555" stroke="#222" stroke-width=".5">Aa</text>
<use href="#group" x="246" y="47" width="32" height="32"/>
<use href="#man" x="285" y="47" width="32" height="32"/>
<use href="#lst" x="323" y="47" width="32" height="32"/>
<use href="#armor" x="363" y="47" width="32" height="32"/>
<use href="#flags" x="401" y="47" width="32" height="32"/>
<use href="#xyzb" x="449" y="47" width="32" height="32"/>
<text x="452" y="70" font-family="Liberation Mono,monospace" font-weight="bold" font-size="15" fill="#222">Xyz</text>
<use href="#scroll" x="489" y="47" width="32" height="32"/>
<circle cx="510" cy="68" r="5" fill="#888" stroke="#333"/>
<use href="#scroll" x="529" y="47" width="32" height="32"/>
<path d="M548 67l10-16" stroke="#333" stroke-width="2"/>
<use href="#pad" x="566" y="47" width="32" height="32"/>
<use href="#scroll" x="606" y="47" width="32" height="32"/>
<circle cx="630" cy="64" r="5" fill="#ccc" stroke="#333"/>
<use href="#db" x="644" y="47" width="32" height="32"/>
<use href="#cab" x="691" y="47" width="32" height="32"/>
<use href="#gear" x="738" y="47" width="32" height="32"/>
<use href="#gearb" x="777" y="47" width="32" height="32"/>
<use href="#lines" x="815" y="47" width="32" height="32"/>
<use href="#afield" x="855" y="47" width="32" height="32"/>
<use href="#ball" x="902" y="47" width="32" height="32"/>
<use href="#winplay" x="940" y="47" width="32" height="32"/>
<use href="#phone" x="979" y="47" width="32" height="32"/>
<use href="#floppy" x="1018" y="47" width="32" height="32"/>

<!-- grips -->
<path d="M189.500 91v36M189.500 134v24M575.500 134v24M798.500 134v24" stroke="#aaa" stroke-dasharray="1 2"/>

<!-- tool row -->
<use href="#cursor" x="205" y="90" width="20" height="20"/>
<use href="#pen" x="243" y="90" width="20" height="20"/>
<use href="#rect" x="281" y="90" width="20" height="20"/>
<use href="#actorS" x="321" y="90" width="20" height="20"/>
<use href="#route" x="359" y="90" width="20" height="20"/>
<use href="#timer" x="399" y="90" width="20" height="20"/>
<use href="#doorS" x="438" y="90" width="20" height="20"/>
<use href="#item" x="477" y="90" width="20" height="20"/>
<use href="#bulb" x="516" y="90" width="20" height="20"/>
<use href="#spk" x="555" y="90" width="20" height="20"/>
<use href="#zone" x="593" y="90" width="20" height="20"/>
<use href="#block" x="632" y="90" width="20" height="20"/>
<use href="#com" x="672" y="90" width="20" height="20"/>
<use href="#play" x="710" y="90" width="20" height="20"/>
<use href="#test" x="750" y="90" width="20" height="20"/>

<!-- display row -->
<use href="#film" x="237" y="134" width="20" height="20"/>
<use href="#bulb" x="261" y="134" width="20" height="20"/>
<use href="#rain" x="284" y="134" width="20" height="20"/>
<use href="#spk" x="306" y="134" width="20" height="20"/>
<use href="#grid" x="330" y="134" width="20" height="20"/>
<use href="#magnet" x="353" y="134" width="20" height="20"/>
<use href="#layers" x="376" y="134" width="20" height="20"/>
<use href="#box" x="399" y="134" width="20" height="20"/>
<use href="#excl" x="422" y="134" width="20" height="20"/>
<use href="#chev" x="487" y="141" width="12" height="8"/>

<!-- sidebar bits -->
<use href="#map" x="7" y="657" width="20" height="20"/>
<use href="#listS" x="66" y="659" width="20" height="20"/>
<use href="#newdoc" x="160" y="658" width="18" height="18"/>
<use href="#folder" x="5" y="681" width="17" height="15"/>
<path d="M13.500 696v8.500h7" stroke="#888" stroke-dasharray="1 1"/>
<use href="#map" x="20" y="695" width="18" height="18"/>

<!-- sprites toolbar -->
<use href="#newdoc" x="236" y="301" width="18" height="18"/>
<use href="#folder" x="265" y="303" width="17" height="15"/>
<use href="#copy" x="297" y="301" width="18" height="18"/>
<use href="#copyd" x="325" y="301" width="18" height="18"/>
<use href="#del" x="353" y="301" width="18" height="18"/>
<use href="#exp" x="385" y="301" width="18" height="18"/>
<path d="M1159.500 277.500l10 10m0-10l-10 10" stroke="#222"/>

<!-- tree -->
<use href="#cabS" x="234" y="326" width="16" height="16"/>
<path d="M242.500 342v168.500h9" stroke="#999" stroke-dasharray="1 1"/>
<g stroke="#444" fill="#f5f5f5"><rect x="238.500" y="346.500" width="8" height="8"/><rect x="238.500" y="362.500" width="8" height="8"/><rect x="238.500" y="378.500" width="8" height="8"/><rect x="238.500" y="394.500" width="8" height="8"/><rect x="238.500" y="410.500" width="8" height="8"/><rect x="238.500" y="426.500" width="8" height="8"/><rect x="238.500" y="442.500" width="8" height="8"/><rect x="238.500" y="458.500" width="8" height="8"/><rect x="238.500" y="474.500" width="8" height="8"/><rect x="238.500" y="490.500" width="8" height="8"/></g>
<path d="M240.500 350.500h4M242.500 348.500v4M240.500 366.500h4M242.500 364.500v4M240.500 382.500h4M242.500 380.500v4M240.500 398.500h4M242.500 396.500v4M240.500 414.500h4M242.500 412.500v4M240.500 430.500h4M242.500 428.500v4M240.500 446.500h4M242.500 444.500v4M240.500 462.500h4M242.500 460.500v4M240.500 478.500h4M242.500 476.500v4M240.500 494.500h4M242.500 492.500v4" stroke="#222"/>
<use href="#folder" x="250" y="343" width="17" height="15"/>
<use href="#folder" x="250" y="359" width="17" height="15"/>
<use href="#folder" x="250" y="375" width="17" height="15"/>
<use href="#folder" x="250" y="391" width="17" height="15"/>
<use href="#folder" x="250" y="407" width="17" height="15"/>
<use href="#folder" x="250" y="423" width="17" height="15"/>
<use href="#folder" x="250" y="439" width="17" height="15"/>
<use href="#folder" x="250" y="455" width="17" height="15"/>
<use href="#folder" x="250" y="471" width="17" height="15"/>
<use href="#folder" x="250" y="487" width="17" height="15"/>
<use href="#actorS" x="250" y="502" width="16" height="18"/>

<!-- sprites form bits -->
<use href="#chev" x="645" y="359" width="11" height="7"/>
<use href="#chev" x="1150" y="515" width="11" height="7"/>
<use href="#chev" x="901" y="642" width="11" height="7"/>
<path d="M522 698l10 13m0-13l-10 13" stroke="#555" stroke-width="2"/>
<path d="M645.500 663l4-4 4 4" stroke="#444" stroke-width="1.500"/>
<path d="M645.500 733l4 4 4-4" stroke="#444" stroke-width="1.500"/>
<use href="#clock" x="542" y="751" width="58" height="58"/>
<circle cx="1054" cy="324" r="8" fill="#f5f5f5" stroke="#666"/><path d="M1054 324l3 7" stroke="#333"/>
<circle cx="806" cy="540" r="8" fill="#f5f5f5" stroke="#666"/><path d="M806 540l-5 6" stroke="#333"/>

<use href="#appleg" x="688" y="357" width="42" height="50"/>
<text x="719" y="365" font-family="Liberation Sans,sans-serif" font-size="12" fill="#eee">0,1</text>
<path d="M753 368h8v8h8v8h-8v8h-8v-8h-8v-8h8z" fill="#ddd" stroke="#111"/>
<path d="M1145 351l4-4 4 4M1145 489l4 4 4-4" stroke="#ccc" stroke-width="1.500"/>

<use href="#half" x="927" y="536" width="20" height="20"/>
<use href="#bulb" x="949" y="536" width="20" height="20"/>
<use href="#play" x="972" y="536" width="20" height="20"/>
<use href="#sync" x="995" y="536" width="20" height="20"/>
<path d="M1022 552h2M1028 552h2M1034 552h2" stroke="#111" stroke-width="2"/>
<path d="M801 668l3 3 5-7" stroke="#444" stroke-width="1.300"/>
<use href="#apple" x="1032" y="677" width="25" height="30"/>

<!-- seq editor toolbar -->
<use href="#logo" x="1223" y="300" width="18" height="18"/>
<path d="M1740 308.500h10" stroke="#222"/>
<rect x="1785.500" y="303.500" width="10" height="10" stroke="#222"/>
<path d="M1831.500 303.500l10 10m0-10l-10 10" stroke="#222"/>
<use href="#film" x="1273" y="330" width="20" height="20"/>
<use href="#block" x="1305" y="330" width="20" height="20"/>
<use href="#cyl" x="1328" y="330" width="20" height="20"/>
<use href="#sph" x="1351" y="330" width="20" height="20"/>
<use href="#terr" x="1374" y="330" width="20" height="20"/>
<use href="#flag" x="1405" y="330" width="18" height="20"/>
<use href="#flag" x="1428" y="330" width="18" height="20"/>
<use href="#flag" x="1452" y="330" width="18" height="20"/>
<use href="#flag" x="1475" y="330" width="18" height="20"/>
<g font-family="Liberation Sans,sans-serif" font-size="10" fill="#222"><text x="1418" y="347">1</text><text x="1441" y="347">2</text><text x="1465" y="347">3</text><text x="1487" y="347">4</text><text x="1519" y="348">1</text><text x="1541" y="348">2</text><text x="1564" y="348">3</text></g>
<use href="#node" x="1507" y="330" width="16" height="16"/>
<use href="#node" x="1530" y="330" width="16" height="16"/>
<use href="#node" x="1553" y="330" width="16" height="16"/>
<circle cx="1580" cy="338" r="2" fill="#666"/>
<use href="#grid" x="1663" y="329" width="20" height="20"/>
<use href="#magnet" x="1686" y="329" width="20" height="20"/>
<use href="#half" x="1708" y="329" width="20" height="20"/>
<use href="#bulb" x="1730" y="329" width="20" height="20"/>
<use href="#play" x="1753" y="329" width="20" height="20"/>
<use href="#sync" x="1776" y="329" width="20" height="20"/>
<path d="M1803 345h2M1809 345h2M1815 345h2" stroke="#111" stroke-width="2"/>
<use href="#move" x="1275" y="361" width="20" height="20"/>
<use href="#scale" x="1297" y="361" width="20" height="20"/>
<use href="#rot" x="1319" y="361" width="20" height="20"/>
<use href="#rot2" x="1342" y="361" width="20" height="20"/>
<use href="#chev" x="1325" y="579" width="11" height="7"/>
<use href="#clock" x="1345" y="556" width="38" height="38"/>
<use href="#clock" x="1385" y="556" width="38" height="38"/>
<use href="#clock" x="1425" y="556" width="38" height="38"/>

<!-- grid -->
<path d="M1505.500 377v288M1561.500 377v288M1618.500 377v288M1730.500 377v288M1786.500 377v288M1842.500 377v288M1474 422.500h380M1474 478.500h380M1474 591.500h380M1474 647.500h380" stroke="#3c3c3c"/>
<path d="M1674.500 377v288M1474 535.500h380" stroke="#666"/>
<use href="#apple" x="1651" y="484" width="42" height="50"/>
<path d="M1653.500 485v50M1696.500 485v50" stroke="#8f8f00"/>
<path d="M1653 485.500h43M1653 535.500h43" stroke="#ff0"/>
<g fill="#ff0" stroke="#f00" stroke-width="2"><rect x="1650" y="482" width="7" height="7"/><rect x="1692" y="482" width="7" height="7"/><rect x="1650" y="531" width="7" height="7"/><rect x="1692" y="531" width="7" height="7"/></g>
<path d="M1486 675v3M1841 675v3M1486 703v4M1841 703v4" stroke="#bbb"/>
</svg>

<!-- red annotations -->
<div class="r" style="left:925px;top:580px;width:240px;height:228px;border-width:4px"></div>
<div class="r" style="left:1035px;top:828px;width:65px;height:19px;border-width:2px"></div>
<div class="r" style="left:1226px;top:406px;width:235px;height:15px;border-width:2px"></div>
<div class="r" style="left:1635px;top:470px;width:73px;height:79px;border-width:4px"></div>
<div class="r" style="left:1810px;top:294px;width:49px;height:29px;border-width:2px"></div>
<div class="q" style="left:933px;top:586px">1</div>
<div class="q" style="left:1209px;top:397px">2</div>
<div class="q" style="left:1613px;top:495px">3</div>
<div class="q" style="left:1793px;top:294px">4</div>
<div class="q" style="left:1017px;top:823px">5</div>
</body></html>
